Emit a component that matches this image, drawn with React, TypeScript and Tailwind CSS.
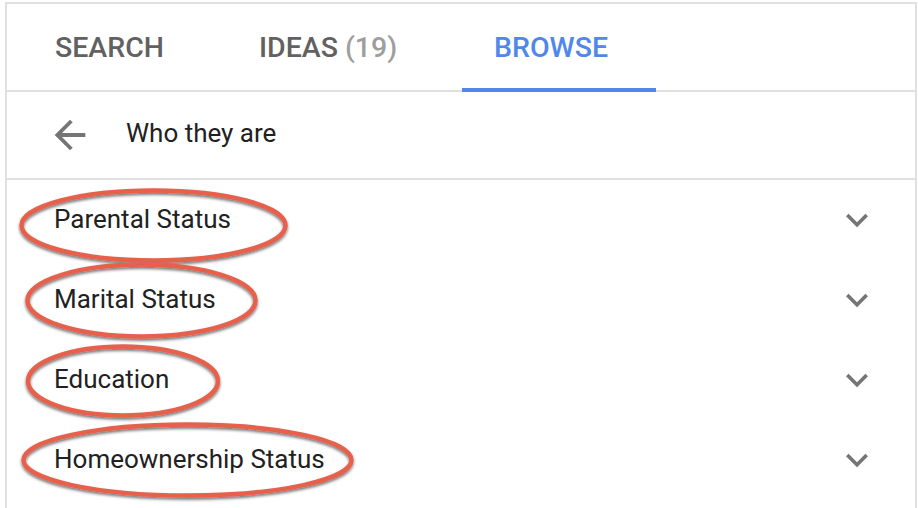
import React from "react";

const items = ["Parental Status", "Marital Status", "Education", "Homeownership Status"];

// annotation ellipses drawn over the list
const marks = [
  { cx: 153.5, cy: 225.5, rx: 132, ry: 35 },
  { cx: 141.5, cy: 300.5, rx: 114, ry: 36 },
  { cx: 123, cy: 381, rx: 95, ry: 34.5 },
  { cx: 187.5, cy: 460, rx: 164, ry: 35.5 },
];

function BackArrow() {
  return (
    <svg width="46" height="46" viewBox="0 0 24 24" className="fill-[#757575]">
      <path d="M20 11H7.83l5.59-5.59L12 4l-8 8 8 8 1.41-1.41L7.83 13H20v-2z" />
    </svg>
  );
}

function ExpandMore() {
  return (
    <svg width="44" height="44" viewBox="0 0 24 24" className="fill-[#757575]">
      <path d="M16.59 8.59L12 13.17 7.41 8.59 6 10l6 6 6-6z" />
    </svg>
  );
}

export default function App() {
  return (
    <div className="relative h-[508px] w-[918px] overflow-hidden bg-white font-['Roboto',sans-serif]">
      <div className="ml-[5px] mt-[2px] h-[520px] w-[912px] border-2 border-b-0 border-[#e0e0e0]">
        <div className="flex h-[88px] border-b-2 border-[#e0e0e0] pt-[2px]">
          <div className="flex w-[207px] items-center pl-[48px] text-[28.5px] font-medium text-[#616161]">
            SEARCH
          </div>
          <div className="flex w-[248px] items-center pl-[45px] text-[28.5px] font-medium text-[#616161]">
            IDEAS<span className="ml-[7px] text-[#9e9e9e]">(19)</span>
          </div>
          <div className="relative flex w-[194px] items-center pl-[32px] text-[28.5px] font-medium text-[#4f87ec]">
            BROWSE
            <div className="absolute -bottom-[2px] left-0 right-0 h-[4px] bg-[#4f87ec]" />
          </div>
        </div>
        <div className="flex h-[88px] items-center border-b-2 border-[#e0e0e0] pl-[40px]">
          <BackArrow />
          <span className="mb-[3px] ml-[33px] text-[26px] text-[#212121]">Who they are</span>
        </div>
        <div className="flex flex-col">
          {items.map((t) => (
            <div key={t} className="flex h-[80px] items-center justify-between pl-[47px] pr-[36px]">
              <span className="mb-[2px] text-[26px] text-[#212121]">{t}</span>
              <ExpandMore />
            </div>
          ))}
        </div>
      </div>
      <svg className="pointer-events-none absolute left-0 top-0" width="918" height="508">
        <defs>
          <filter id="sh" x="-10%" y="-30%" width="120%" height="160%">
            <feDropShadow dx="0" dy="2" stdDeviation="1.5" floodColor="#000" floodOpacity="0.55" />
          </filter>
        </defs>
        {marks.map((m, i) => (
          <ellipse
            key={i}
            cx={m.cx}
            cy={m.cy}
            rx={m.rx}
            ry={m.ry}
            fill="none"
            stroke="#e6604c"
            strokeWidth="4.5"
            filter="url(#sh)"
          />
        ))}
      </svg>
    </div>
  );
}
